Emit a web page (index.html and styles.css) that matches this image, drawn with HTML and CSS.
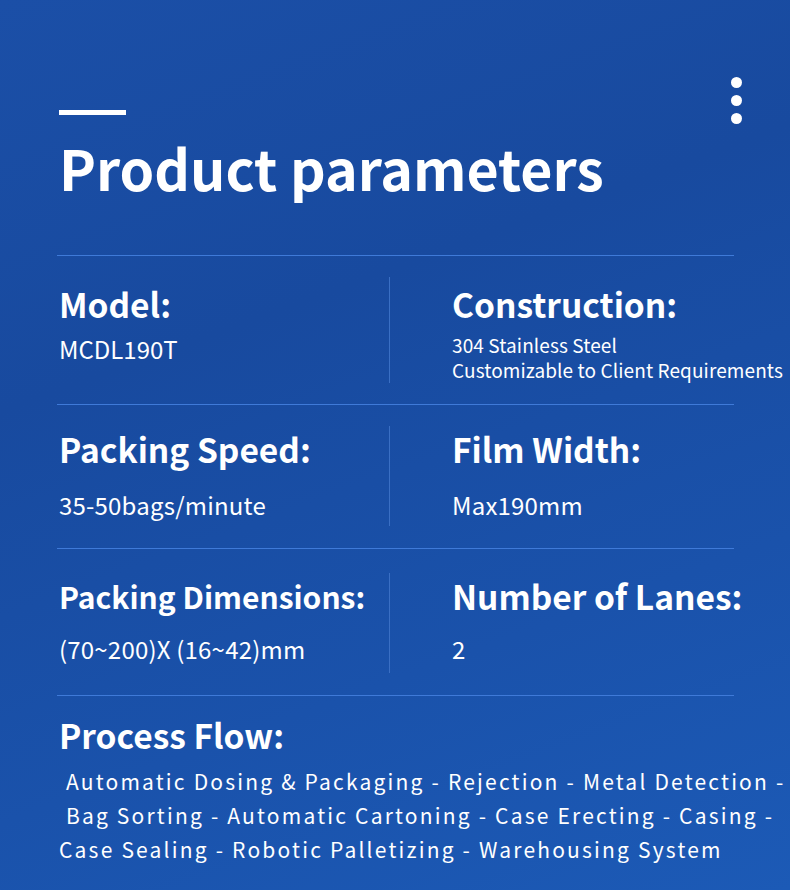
FILE: index.html
```html
<!DOCTYPE html>
<html lang="en">
<head>
<meta charset="utf-8">
<title>Product parameters</title>
<link rel="stylesheet" href="styles.css">
</head>
<body>
<main class="page">
  <div class="dots"><span></span><span></span><span></span></div>
  <header class="head">
    <div class="accent"></div>
    <h1 class="title">Product parameters</h1>
  </header>
  <section class="params">
    <div class="row row1">
      <div class="cell">
        <h2 class="label">Model:</h2>
        <p class="value">MCDL190T</p>
      </div>
      <div class="cell right">
        <h2 class="label">Construction:</h2>
        <p class="value small">304 Stainless Steel<br>Customizable to Client Requirements</p>
      </div>
    </div>
    <div class="row row2">
      <div class="cell">
        <h2 class="label">Packing Speed:</h2>
        <p class="value">35-50bags/minute</p>
      </div>
      <div class="cell right">
        <h2 class="label">Film Width:</h2>
        <p class="value">Max190mm</p>
      </div>
    </div>
    <div class="row row3">
      <div class="cell">
        <h2 class="label narrow">Packing Dimensions:</h2>
        <p class="value">(70~200)X (16~42)mm</p>
      </div>
      <div class="cell right">
        <h2 class="label">Number of Lanes:</h2>
        <p class="value">2</p>
      </div>
    </div>
  </section>
  <section class="flow">
    <h2 class="label">Process Flow:</h2>
    <p class="flow-text">&nbsp;Automatic Dosing &amp; Packaging - Rejection - Metal Detection -<br>&nbsp;Bag Sorting - Automatic Cartoning - Case Erecting - Casing -<br>Case Sealing - Robotic Palletizing - Warehousing System</p>
  </section>
</main>
</body>
</html>
```
FILE: styles.css
```css
html, body {
  margin: 0;
  padding: 0;
}
body {
  width: 790px;
  height: 890px;
  overflow: hidden;
  background: linear-gradient(160deg, #1b4fa7 0%, #184a9f 35%, #1a52ab 70%, #1c5ab6 100%);
  font-family: "Noto Sans CJK SC", "Noto Sans", sans-serif;
  color: #ffffff;
}
.page {
  position: relative;
  padding: 110px 56px 0 57px;
  height: 890px;
  box-sizing: border-box;
}
.dots {
  position: absolute;
  top: 77px;
  left: 731px;
  display: flex;
  flex-direction: column;
  gap: 7px;
}
.dots span {
  display: block;
  width: 11px;
  height: 11px;
  border-radius: 50%;
  background: #ffffff;
}
.head {
  padding-left: 2px;
}
.accent {
  width: 67px;
  height: 5px;
  background: #ffffff;
}
.title {
  margin: 17px 0 0;
  font-size: 55.5px;
  line-height: 70px;
  font-weight: 700;
  letter-spacing: 0;
}
.params {
  margin-top: 53px;
}
.row {
  display: grid;
  grid-template-columns: 332px 345px;
  border-top: 1px solid #3f7ad8;
  box-sizing: border-box;
}
.row1 { height: 149px; padding-top: 25px; }
.row2 { height: 144px; padding-top: 21px; }
.row3 { height: 147px; padding-top: 24px; }
.cell {
  padding-left: 2px;
  height: 100px;
}
.row1 .cell { height: 102px; margin-top: -4px; padding-top: 4px; }
.cell.right {
  border-left: 1px solid #3a6fc4;
  padding-left: 62px;
}
.label {
  margin: 0;
  font-size: 33.5px;
  line-height: 46px;
  font-weight: 700;
  white-space: nowrap;
}
.label.narrow {
  font-size: 30px;
}
.value {
  margin: 15px 0 0;
  font-size: 24px;
  line-height: 30px;
  font-weight: 400;
  letter-spacing: 0.2px;
  white-space: nowrap;
}
.row2 .value {
  margin-top: 18px;
}
.row1 .value {
  margin-top: 7px;
  letter-spacing: 0;
}
.row1 .value.small {
  margin-top: 5px;
  font-size: 19px;
  line-height: 25px;
  letter-spacing: 0.1px;
}
.flow {
  border-top: 1px solid #3f7ad8;
  width: 677px;
  box-sizing: border-box;
  padding: 16px 0 0 2px;
}
.flow-text {
  margin: 6px 0 0;
  font-size: 21px;
  line-height: 34px;
  letter-spacing: 2.2px;
  white-space: nowrap;
}
```
